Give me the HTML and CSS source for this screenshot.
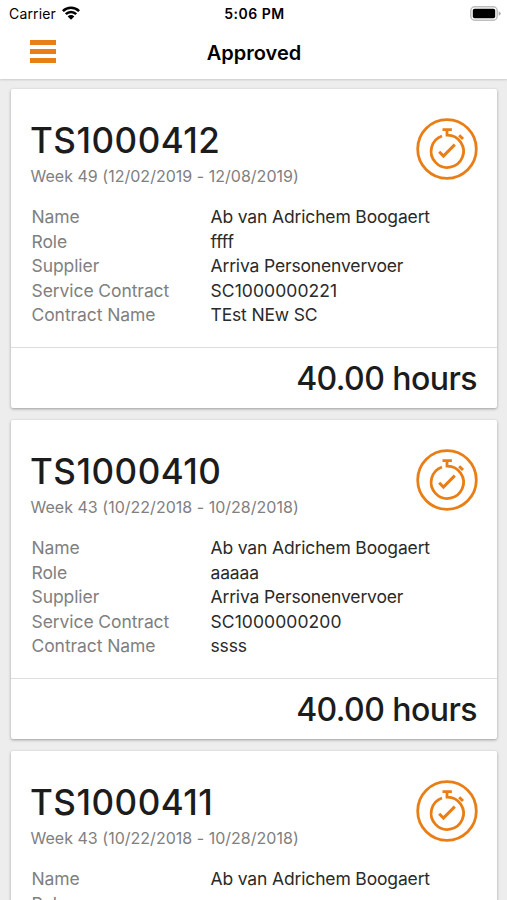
FILE: index.html
```html
<!DOCTYPE html>
<html lang="en">
<head>
  <meta charset="UTF-8" />
  <meta name="viewport" content="width=device-width, initial-scale=1.0" />
  <title>Approved</title>
  <link rel="stylesheet" href="styles.css">
</head>
<body>
  <!-- Shared icons -->
  <svg class="icon-defs" width="0" height="0">
    <symbol id="stopwatch" viewBox="0 0 62 62">
      <g fill="none" stroke="#e97e16" stroke-width="2.8">
        <circle cx="31" cy="31" r="29.3"/>
        <path d="M26 18A16.2 16.2 0 1 0 31 17.1V11.7M26.5 11.7h9.4"/>
        <path d="M43.2 17.2l3.8 3.8" stroke-width="3"/>
        <path d="M23.2 33.8l4.2 4.3 11.4-11.5" stroke-width="3"/>
      </g>
    </symbol>
  </svg>

  <header class="header">
    <div class="status-bar">
      <div class="carrier">
        <span>Carrier</span>
        <svg class="wifi" viewBox="0 0 18 14">
          <g fill="none" stroke="#000" stroke-width="2.6">
            <path d="M.9 5.1a11.5 11.5 0 0 1 16.2 0"/>
            <path d="M3.8 8.2a7.4 7.4 0 0 1 10.4 0"/>
          </g>
          <path d="M9 13.8L5.7 10.4a4.7 4.7 0 0 1 6.6 0z"/>
        </svg>
      </div>
      <div class="time">5:06 PM</div>
      <svg class="battery" viewBox="0 0 31 15">
        <rect x=".8" y=".8" width="26.4" height="13.4" rx="4" fill="#fff" stroke="#bdbdbd" stroke-width="1.5"/>
        <rect x="2.8" y="2.8" width="22.4" height="9.4" rx="1.8"/>
        <path d="M28.7 5.2q2 .9 2 2.3t-2 2.3z" fill="#aaa"/>
      </svg>
    </div>
    <div class="nav-bar">
      <button class="menu-button" aria-label="Menu"><i></i><i></i><i></i></button>
      <h1>Approved</h1>
    </div>
  </header>

  <main class="list">
    <section class="card">
      <div class="card-body">
        <div class="card-head">
          <div>
            <h2>TS1000412</h2>
            <p class="week">Week 49 (12/02/2019 - 12/08/2019)</p>
          </div>
          <svg class="status-icon"><use href="#stopwatch"/></svg>
        </div>
        <dl class="details">
          <dt>Name</dt><dd>Ab van Adrichem Boogaert</dd>
          <dt>Role</dt><dd>ffff</dd>
          <dt>Supplier</dt><dd>Arriva Personenvervoer</dd>
          <dt>Service Contract</dt><dd class="number">SC1000000221</dd>
          <dt>Contract Name</dt><dd>TEst NEw SC</dd>
        </dl>
      </div>
      <div class="hours">40.00 hours</div>
    </section>

    <section class="card">
      <div class="card-body">
        <div class="card-head">
          <div>
            <h2>TS1000410</h2>
            <p class="week">Week 43 (10/22/2018 - 10/28/2018)</p>
          </div>
          <svg class="status-icon"><use href="#stopwatch"/></svg>
        </div>
        <dl class="details">
          <dt>Name</dt><dd>Ab van Adrichem Boogaert</dd>
          <dt>Role</dt><dd>aaaaa</dd>
          <dt>Supplier</dt><dd>Arriva Personenvervoer</dd>
          <dt>Service Contract</dt><dd class="number">SC1000000200</dd>
          <dt>Contract Name</dt><dd>ssss</dd>
        </dl>
      </div>
      <div class="hours">40.00 hours</div>
    </section>

    <section class="card">
      <div class="card-body">
        <div class="card-head">
          <div>
            <h2>TS1000411</h2>
            <p class="week">Week 43 (10/22/2018 - 10/28/2018)</p>
          </div>
          <svg class="status-icon"><use href="#stopwatch"/></svg>
        </div>
        <dl class="details">
          <dt>Name</dt><dd>Ab van Adrichem Boogaert</dd>
          <dt>Role</dt><dd></dd>
        </dl>
      </div>
    </section>
  </main>
</body>
</html>
```
FILE: styles.css
```css
:root {
  --orange: #e97e16;
  --bg-color: #ededed;
  --text-color: #1c1c1c;
  --muted-color: #808080;
}
* { box-sizing: border-box; }
body {
  margin: 0;
  height: 100vh;
  overflow: hidden;
  display: flex;
  flex-direction: column;
  font-family: Inter, "Liberation Sans", sans-serif;
  background: var(--bg-color);
  color: var(--text-color);
}
h1, h2, p, dl, dd { margin: 0; }
.icon-defs { position: absolute; }

/* Header */
.header {
  flex: none;
  height: 79px;
  background: #fff;
  color: #000;
  box-shadow: 0 1px 2px rgba(0, 0, 0, 0.15);
}
.status-bar {
  display: grid;
  grid-template-columns: 1fr auto 1fr;
  align-items: center;
  height: 26px;
  padding: 0 6px 0 8px;
  font-size: 14px;
}
.carrier {
  display: flex;
  align-items: center;
  gap: 6px;
  padding-left: 1px;
  letter-spacing: 0.15px;
}
.wifi {
  width: 18px;
  height: 14px;
}
.time {
  font-weight: 600;
  letter-spacing: 0.5px;
}
.battery {
  width: 31px;
  height: 15px;
  justify-self: end;
}
.nav-bar {
  display: grid;
  grid-template-columns: 1fr auto 1fr;
  align-items: center;
  height: 51px;
  padding: 0 28px 0 29px;
}
.menu-button {
  display: flex;
  flex-direction: column;
  gap: 4px;
  width: 28px;
  padding: 0 1px;
  border: none;
  background: none;
}
.menu-button i {
  height: 5px;
  background: var(--orange);
}
.nav-bar h1 {
  padding-top: 2px;
  font-size: 20px;
  font-weight: 600;
}

/* Timesheet cards */
.list {
  display: flex;
  flex-direction: column;
  gap: 12px;
  padding: 10px 10px 0 11px;
}
.card {
  flex: none;
  height: 319px;
  display: flex;
  flex-direction: column;
  background: #fff;
  border-radius: 2px;
  box-shadow: 0 1px 3px rgba(0, 0, 0, 0.35);
}
.card-body {
  flex: 1;
  padding: 29px 19px 0 19px;
}
.card-head {
  display: flex;
  justify-content: space-between;
}
.card h2 {
  font-size: 35px;
  font-weight: 450;
  line-height: 44px;
  letter-spacing: 0.5px;
}
.week {
  padding: 3px 0 1px 0.5px;
  font-size: 16px;
  line-height: 22px;
  letter-spacing: 0.02px;
  color: var(--muted-color);
}
.status-icon {
  width: 62px;
  height: 62px;
}
.details {
  display: grid;
  grid-template-columns: 179px 1fr;
  grid-auto-rows: 24.5px;
  padding: 17px 0 0 1.5px;
  font-size: 17.5px;
  line-height: 24.5px;
  letter-spacing: -0.15px;
}
.details dt {
  color: var(--muted-color);
  letter-spacing: -0.08px;
}
.details dd { color: #2a2a2a; }
.details .number { letter-spacing: 0.08px; }
.hours {
  height: 61px;
  padding-right: 20px;
  border-top: 1px solid #ddd;
  font-size: 32px;
  font-weight: 450;
  line-height: 61px;
  letter-spacing: -0.55px;
  text-align: right;
}
```
